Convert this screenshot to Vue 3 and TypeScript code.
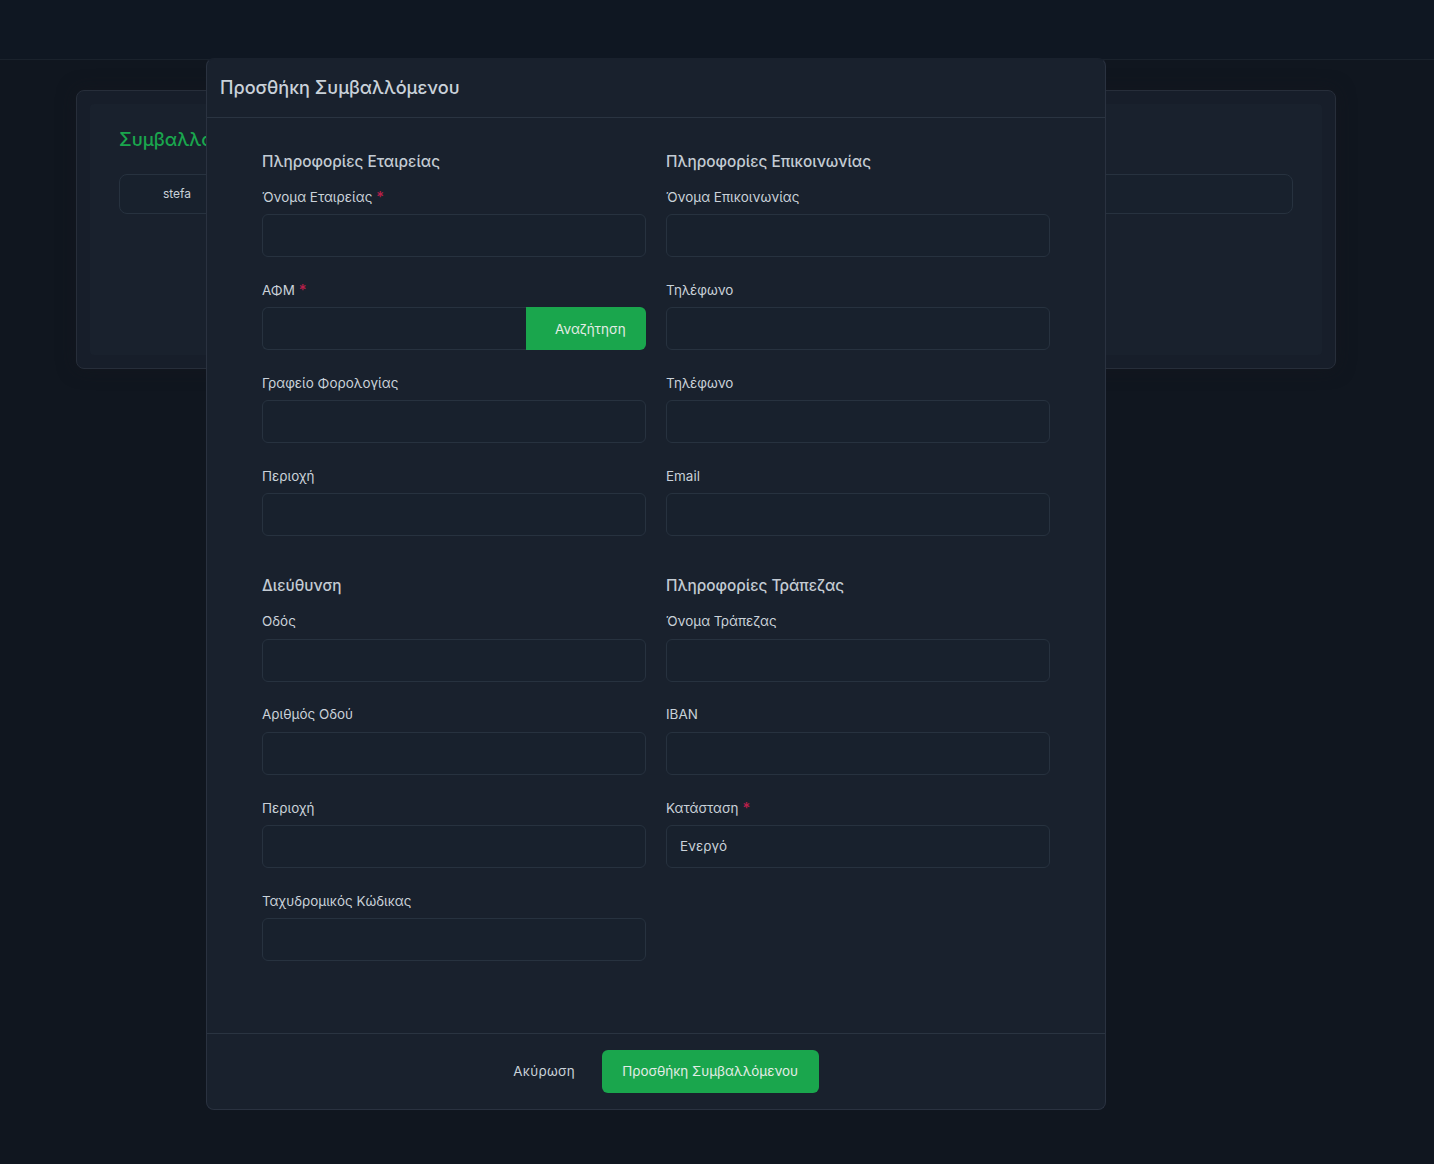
<script setup lang="ts">
interface Field {
  label: string
  required?: boolean
  value?: string
  search?: boolean
}

interface Section {
  title: string
  fields: Field[]
}

const sections: Section[] = [
  {
    title: 'Πληροφορίες Εταιρείας',
    fields: [
      { label: 'Όνομα Εταιρείας', required: true },
      { label: 'ΑΦΜ', required: true, search: true },
      { label: 'Γραφείο Φορολογίας' },
      { label: 'Περιοχή' },
    ],
  },
  {
    title: 'Πληροφορίες Επικοινωνίας',
    fields: [
      { label: 'Όνομα Επικοινωνίας' },
      { label: 'Τηλέφωνο' },
      { label: 'Τηλέφωνο' },
      { label: 'Email' },
    ],
  },
  {
    title: 'Διεύθυνση',
    fields: [
      { label: 'Οδός' },
      { label: 'Αριθμός Οδού' },
      { label: 'Περιοχή' },
      { label: 'Ταχυδρομικός Κώδικας' },
    ],
  },
  {
    title: 'Πληροφορίες Τράπεζας',
    fields: [
      { label: 'Όνομα Τράπεζας' },
      { label: 'IBAN' },
      { label: 'Κατάσταση', required: true, value: 'Ενεργό' },
    ],
  },
]
</script>

<template>
  <div class="page">
    <header class="topbar"></header>
    <main class="content">
      <div class="card">
        <div class="card-inner">
          <h1 class="card-title">Συμβαλλόμενοι</h1>
          <div class="chip-row">
            <span class="chip-cell">stefa</span>
          </div>
        </div>
      </div>
    </main>

    <div class="modal">
      <div class="modal-head">Προσθήκη Συμβαλλόμενου</div>
      <div class="modal-body">
        <section v-for="section in sections" :key="section.title" class="section">
          <h3 class="section-title">{{ section.title }}</h3>
          <div v-for="(field, i) in section.fields" :key="i" class="field">
            <label class="field-label">
              {{ field.label }}<span v-if="field.required" class="star"> *</span>
            </label>
            <div class="input-wrap">
              <div class="input" :class="{ 'input-joined': field.search }">{{ field.value }}</div>
              <button v-if="field.search" class="search-btn">Αναζήτηση</button>
            </div>
          </div>
        </section>
      </div>
      <div class="modal-foot">
        <button class="cancel-btn">Ακύρωση</button>
        <button class="submit-btn">Προσθήκη Συμβαλλόμενου</button>
      </div>
    </div>
  </div>
</template>

<style>
html,
body {
  background: #10161f;
}
</style>

<style scoped>
.page {
  height: 1164px;
  position: relative;
  overflow: hidden;
  font-family: Inter, "Noto Sans", sans-serif;
  color: #c9d1d9;
  background: #10161f;
}

.topbar {
  height: 59px;
  background: #0f1722;
  border-bottom: 1px solid #1a222c;
}

.content {
  padding: 30px 98px 0 76px;
}

.card {
  height: 279px;
  box-sizing: border-box;
  padding: 13px;
  background: #171e2a;
  border: 1px solid #272e3a;
  border-radius: 8px;
  box-shadow: 0 0 18px rgba(22, 24, 30, 0.6);
}

.card-inner {
  height: 100%;
  box-sizing: border-box;
  padding: 21px 29px 0;
  background: #19212d;
  border-radius: 4px;
}

.card-title {
  margin: 0 0 21px;
  font-size: 18.4px;
  line-height: 28px;
  font-weight: 500;
  color: #1aa64d;
}

.chip-row {
  height: 40px;
  box-sizing: border-box;
  border: 1px solid #27323f;
  border-radius: 8px;
  background: #18212d;
}

.chip-cell {
  display: block;
  width: 114px;
  text-align: center;
  font-size: 12px;
  line-height: 38px;
}

.modal {
  position: absolute;
  left: 206px;
  top: 58px;
  width: 900px;
  height: 1052px;
  box-sizing: border-box;
  display: flex;
  flex-direction: column;
  background: #19212d;
  border: 1px solid #2a3240;
  border-top-color: #19212d;
  border-radius: 8px;
}

.modal-head {
  height: 59px;
  box-sizing: border-box;
  padding-left: 13px;
  border-bottom: 1px solid #2a3441;
  font-size: 18.1px;
  font-weight: 500;
  line-height: 57px;
}

.modal-body {
  flex: 1;
  padding: 32.5px 55px 0;
  display: grid;
  grid-template-columns: 384px 384px;
  grid-auto-rows: min-content;
  column-gap: 20px;
  row-gap: 15.84px;
}

.section-title {
  margin: 0 0 14.35px;
  font-size: 15.36px;
  line-height: 22px;
  font-weight: 500;
  color: #c3cbd3;
}

.field {
  margin-bottom: 22.8px;
}

.field-label {
  display: block;
  font-size: 13.44px;
  line-height: 20px;
  margin-bottom: 7.3px;
}

.star {
  color: #b81f4a;
  font-size: 15px;
  line-height: 1;
  font-weight: 500;
}

.input-wrap {
  display: flex;
}

.input {
  flex: 1;
  height: 43px;
  box-sizing: border-box;
  padding: 0 13px;
  line-height: 41px;
  font-size: 13.44px;
  background: #18212d;
  border: 1px solid #27323f;
  border-radius: 6px;
}

.input-joined {
  border-top-right-radius: 0;
  border-bottom-right-radius: 0;
  border-right: 0;
}

.search-btn {
  width: 120px;
  height: 43px;
  padding: 0 20px 0 28.5px;
  border: 0;
  border-radius: 0 6px 6px 0;
  background: #1aa64d;
  color: #e3ece6;
  font: inherit;
  font-size: 13.44px;
  white-space: nowrap;
}

.modal-foot {
  height: 76px;
  box-sizing: border-box;
  padding-top: 16px;
  border-top: 1px solid #2a3441;
  display: flex;
  justify-content: center;
  gap: 6.5px;
  align-items: flex-start;
}

.cancel-btn,
.submit-btn {
  height: 43px;
  border: 0;
  border-radius: 6px;
  font: inherit;
  font-size: 13.44px;
  white-space: nowrap;
  padding-top: 0;
  padding-bottom: 2px;
}

.cancel-btn {
  padding-left: 20px;
  padding-right: 20px;
  background: transparent;
  color: #c9d1d9;
  letter-spacing: 0.28px;
}

.submit-btn {
  padding-left: 20.7px;
  padding-right: 20.7px;
  background: #1aa64d;
  color: #e3ece6;
}
</style>
